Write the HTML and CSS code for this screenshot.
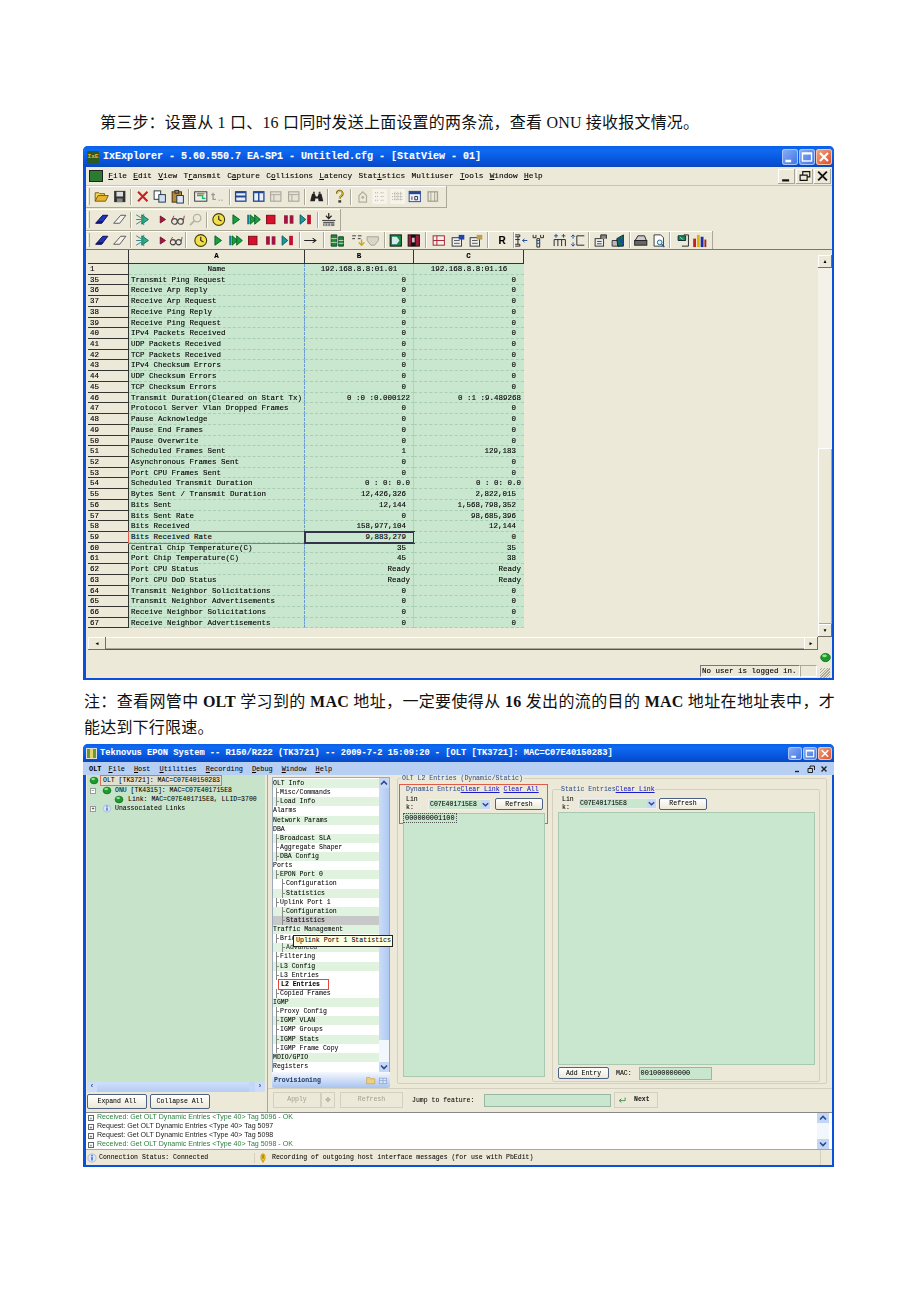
FILE: index.html
```html
<!DOCTYPE html>
<html lang="zh-CN">
<head>
<meta charset="utf-8">
<title>第三步</title>
<link rel="stylesheet" href="styles.css">
</head>
<body>
<svg class="sprite" xmlns="http://www.w3.org/2000/svg">
<symbol id="folder" viewBox="0 0 16 16"><path d="M1 13V4h4l1 1h5v2" fill="#f4d35e" stroke="#7a5a10"/><path d="M1 13l3-6h11l-3 6z" fill="#e8b62c" stroke="#7a5a10"/></symbol>
<symbol id="save" viewBox="0 0 16 16"><rect x="2" y="2" width="12" height="12" fill="#333"/><rect x="4.5" y="3" width="7" height="5" fill="#ddd"/><rect x="5" y="10" width="6" height="4" fill="#888"/></symbol>
<symbol id="x" viewBox="0 0 16 16"><path d="M3 3l10 10M13 3L3 13" stroke="#c8201c" stroke-width="2.2"/></symbol>
<symbol id="copy" viewBox="0 0 16 16"><rect x="2" y="2" width="7" height="9" fill="#fff" stroke="#234"/><rect x="7" y="6" width="7" height="8" fill="#cfe0f5" stroke="#234"/></symbol>
<symbol id="paste" viewBox="0 0 16 16"><rect x="2" y="3" width="10" height="11" fill="#b58a3a" stroke="#43300a"/><rect x="5" y="1.5" width="4" height="3" fill="#888" stroke="#333"/><rect x="7" y="7" width="7" height="8" fill="#dfe8f5" stroke="#234"/></symbol>
<symbol id="frame" viewBox="0 0 16 16"><rect x="1.5" y="3" width="13" height="10" fill="#eee" stroke="#333"/><path d="M4 7h6v3h3" stroke="#1b6" stroke-width="1.5" fill="none"/><path d="M4 5h8" stroke="#b83" stroke-width="1.5"/></symbol>
<symbol id="tdots" viewBox="0 0 16 16"><path d="M3 4v7h3M1 6h4M9 12h1M12 12h1" stroke="#999" stroke-width="1.4" fill="none"/></symbol>
<symbol id="hsplit" viewBox="0 0 16 16"><rect x="2.5" y="3" width="11" height="10" fill="#e9eef8" stroke="#23488f" stroke-width="1.4"/><path d="M2.5 8h11" stroke="#23488f" stroke-width="2"/><path d="M3 3.5h10" stroke="#23488f" stroke-width="2"/></symbol>
<symbol id="vsplit" viewBox="0 0 16 16"><rect x="2.5" y="3" width="11" height="10" fill="#e9eef8" stroke="#23488f" stroke-width="1.4"/><path d="M8 3v10" stroke="#23488f" stroke-width="1.5"/><path d="M3 3.5h10" stroke="#23488f" stroke-width="2"/></symbol>
<symbol id="gsplit" viewBox="0 0 16 16"><rect x="2.5" y="3" width="11" height="10" fill="#e6e4d6" stroke="#aaa89a" stroke-width="1.2"/><path d="M2.5 6h11M6 6v7" stroke="#aaa89a"/></symbol>
<symbol id="binoc" viewBox="0 0 16 16"><path d="M1 13l2-8h3l1 3h2l1-3h3l2 8h-5l-.5-3h-3L6 13z" fill="#222"/><path d="M4 3h2v2H4zM10 3h2v2h-2z" fill="#444"/></symbol>
<symbol id="help" viewBox="0 0 16 16"><path d="M5 5a3 3 0 1 1 4.5 2.5C8.5 8 8 9 8 10.5" stroke="#806a10" stroke-width="2.2" fill="none"/><path d="M5.300 5a2.700 2.700 0 1 1 4 2.300C8.300 8 7.800 9 7.800 10.500" stroke="#f2dc4a" stroke-width="1" fill="none"/><rect x="6.500" y="12" width="3" height="2.500" fill="#333"/></symbol>
<symbol id="glock" viewBox="0 0 16 16"><path d="M4 14V7l4-4 4 4v7z" fill="none" stroke="#b0ae9f" stroke-width="1.3"/><circle cx="8" cy="9" r="1.500" fill="#b0ae9f"/></symbol>
<symbol id="gdots" viewBox="0 0 16 16"><rect width="16" height="16" fill="#f5f3ea"/><path d="M3 4h3M3 8h3M3 12h3M9 4h4M9 8h4M9 12h4" stroke="#aaa89a" stroke-dasharray="1 1"/></symbol>
<symbol id="ggrid" viewBox="0 0 16 16"><rect width="16" height="16" fill="#f5f3ea"/><path d="M2 5h12M2 8h12M2 11h12M5 3v10M8 3v10M11 3v10" stroke="#aaa89a" stroke-dasharray="1 1"/></symbol>
<symbol id="cal" viewBox="0 0 16 16"><rect x="2" y="2.500" width="12" height="11" fill="#eef" stroke="#234a90"/><rect x="2" y="2.500" width="12" height="3" fill="#234a90"/><path d="M5 8v3.500M8 8h3v3.500H8z" stroke="#333" fill="none"/></symbol>
<symbol id="gcal" viewBox="0 0 16 16"><rect x="3" y="3" width="10" height="10" fill="none" stroke="#a5a395" stroke-width="1.400"/><path d="M6 3v10M10 3v10" stroke="#a5a395"/></symbol>
<symbol id="erase" viewBox="0 0 16 16"><path d="M1.500 12L9 3.500h5.500L8 12z" fill="#2333c0" stroke="#0a0a50"/><path d="M1.500 12h6.500l2-2.500H3.700z" fill="#141a70"/></symbol>
<symbol id="erase2" viewBox="0 0 16 16"><path d="M1.500 12L9 3.500h5.500L8 12z" fill="#f4f2ea" stroke="#555"/></symbol>
<symbol id="burst" viewBox="0 0 16 16"><path d="M1 3l5 3M1 13l5-3M1 8h5" stroke="#2b7f8a"/><path d="M7 3l7 5-7 5z" fill="#32b27a" stroke="#0c6b6b"/><path d="M9 2v12" stroke="#2b8fb0"/></symbol>
<symbol id="tri" viewBox="0 0 16 16"><path d="M6 4l6 4-6 4z" fill="#a8163f" stroke="#6d0f2a"/></symbol>
<symbol id="glass" viewBox="0 0 16 16"><circle cx="4.500" cy="10" r="3" fill="none" stroke="#444" stroke-width="1.200"/><circle cx="11" cy="10" r="3" fill="none" stroke="#444" stroke-width="1.200"/><path d="M7.500 9.500h.5M1.500 9L4 4M14 9l1-5" stroke="#a03050"/></symbol>
<symbol id="mag" viewBox="0 0 16 16"><circle cx="9.500" cy="6.500" r="4" fill="none" stroke="#b5b3a4" stroke-width="1.400"/><path d="M2 14l5-5" stroke="#b5b3a4" stroke-width="2"/></symbol>
<symbol id="clock" viewBox="0 0 16 16"><circle cx="8" cy="8" r="6.300" fill="#f4df4a" stroke="#44400a" stroke-width="1.200"/><path d="M8 4v4l3 1.500" stroke="#222" stroke-width="1.200" fill="none"/></symbol>
<symbol id="play" viewBox="0 0 16 16"><path d="M5 3l7 5-7 5z" fill="#18a03a" stroke="#09602a"/></symbol>
<symbol id="ff" viewBox="0 0 16 16"><path d="M1 3h2v10H1z" fill="#1a7a90"/><path d="M4 3l6 5-6 5z" fill="#18a03a" stroke="#09602a"/><path d="M9 3l6 5-6 5z" fill="#18a03a" stroke="#09602a"/></symbol>
<symbol id="stop" viewBox="0 0 16 16"><rect x="3.500" y="3.500" width="9" height="9" fill="#d8102c" stroke="#7a0a1a"/></symbol>
<symbol id="pause" viewBox="0 0 16 16"><rect x="3" y="3.500" width="4" height="9" fill="#a01440"/><rect x="9" y="3.500" width="4" height="9" fill="#a01440"/></symbol>
<symbol id="step" viewBox="0 0 16 16"><path d="M2 3l6 5-6 5z" fill="#1a9aa0" stroke="#0a5a60"/><rect x="9.500" y="3" width="4" height="10" fill="#c01030"/></symbol>
<symbol id="dl" viewBox="0 0 16 16"><path d="M8 1v6M5 4l3 3 3-3" stroke="#222" stroke-width="1.300" fill="none"/><path d="M1 9h14M2 11h12" stroke="#333"/><rect x="2" y="12" width="12" height="3" fill="#777"/><path d="M4 12v3M7 12v3M10 12v3" stroke="#ddd"/></symbol>
<symbol id="arrow" viewBox="0 0 16 16"><path d="M1 8h12M10 5.500L13.500 8 10 10.500" stroke="#222" stroke-width="1.100" fill="none"/></symbol>
<symbol id="bars" viewBox="0 0 16 16"><path d="M1 2h6v12H1zM9 4h5v10H9z" fill="#1f8a35" stroke="#143"/><path d="M1 6h6M1 10h6M9 8h5M9 11h5" stroke="#cdb"/></symbol>
<symbol id="ppp" viewBox="0 0 16 16"><path d="M1 3h4M7 3h4M1 6h3M7 6h3" stroke="#333"/><path d="M11 7v5M8 10l3 3 3-3" stroke="#c4a820" stroke-width="1.500" fill="none"/></symbol>
<symbol id="gheart" viewBox="0 0 16 16"><path d="M2 4h12v4l-4 5H6L2 8z" fill="#d8d6c8" stroke="#a5a395"/></symbol>
<symbol id="hall" viewBox="0 0 16 16"><rect x="2" y="2" width="12" height="12" fill="#148a44" stroke="#111"/><path d="M4 4h5l3 4-3 4H4z" fill="#d8e8f2"/></symbol>
<symbol id="hred" viewBox="0 0 16 16"><rect x="2" y="2" width="12" height="12" fill="#a01a3a" stroke="#111"/><rect x="5" y="2" width="5" height="12" fill="#111"/><rect x="6" y="5" width="3" height="5" fill="#d8b8c0"/></symbol>
<symbol id="form" viewBox="0 0 16 16"><rect x="2" y="3" width="12" height="10" fill="#f2f0e8" stroke="#a02030"/><path d="M2 8h12M6 3v10" stroke="#a02030"/></symbol>
<symbol id="formp" viewBox="0 0 16 16"><rect x="2" y="5" width="10" height="9" fill="#eee" stroke="#333"/><path d="M4 8h6M4 11h6" stroke="#555"/><rect x="9" y="2" width="6" height="5" fill="#2242b0"/></symbol>
<symbol id="formg" viewBox="0 0 16 16"><rect x="2" y="5" width="10" height="9" fill="#eee" stroke="#333"/><path d="M4 8h6M4 11h6" stroke="#555"/><rect x="9" y="2" width="6" height="5" fill="#bba050"/></symbol>
<symbol id="a1" viewBox="0 0 16 16"><path d="M2 2h5v2H2M2 7h5M2 14h5v-2H2M5 4v8" fill="none" stroke="#222"/><path d="M10 8h5M12 6l-2 2 2 2" stroke="#1a4aa0" fill="none"/></symbol>
<symbol id="a2" viewBox="0 0 16 16"><path d="M2 2v3h3V2M10 2v3h3V2M6 6h3v9H6z" fill="none" stroke="#222"/><path d="M6 8h3M6 11h3" stroke="#1a4aa0"/></symbol>
<symbol id="a3" viewBox="0 0 16 16"><path d="M2 14V7h12v7M6 7v7M10 7v7" fill="none" stroke="#222"/><path d="M4 5V1M12 5V1M2 3h4M10 3h4" stroke="#1a4aa0"/></symbol>
<symbol id="a4" viewBox="0 0 16 16"><path d="M7 3h8M7 13h8M7 3v10" fill="none" stroke="#222"/><path d="M3 2v4M3 10v4M1 4l2-2 2 2M1 12l2 2 2-2" stroke="#1a4aa0" fill="none"/></symbol>
<symbol id="house" viewBox="0 0 16 16"><rect x="2" y="6" width="9" height="8" fill="#eee" stroke="#333"/><path d="M8 6V2h6v4" fill="#888" stroke="#222"/><path d="M4 9h5M4 11.500h5" stroke="#444"/></symbol>
<symbol id="house2" viewBox="0 0 16 16"><path d="M2 8h8v6H2z" fill="#bbb" stroke="#333"/><path d="M7 6l7-4v12H8z" fill="#166a55" stroke="#123"/><path d="M10 6l4 6" stroke="#1b3fc0" stroke-width="2"/></symbol>
<symbol id="printer" viewBox="0 0 16 16"><path d="M2 8l3-5h7l2 5z" fill="#ccc" stroke="#222"/><rect x="1.500" y="8" width="13" height="5" fill="#666" stroke="#222"/></symbol>
<symbol id="prev" viewBox="0 0 16 16"><path d="M3 2h7l3 3v9H3z" fill="#fff" stroke="#333"/><circle cx="9" cy="10" r="2.500" fill="#cfe" stroke="#2a5a90"/><path d="M11 12l3 3" stroke="#2a5a90" stroke-width="1.500"/></symbol>
<symbol id="note" viewBox="0 0 16 16"><path d="M8 2h5v12H6" fill="none" stroke="#222"/><path d="M2 3h8v5H2z" fill="#138a55" stroke="#123"/><path d="M4 4l3 3" stroke="#cde"/></symbol>
<symbol id="chart" viewBox="0 0 16 16"><rect x="1" y="6" width="3" height="9" fill="#c81e1e"/><rect x="5" y="2" width="3" height="13" fill="#e0b010"/><rect x="9" y="4" width="3" height="11" fill="#1a2ea0"/><rect x="13" y="7" width="2" height="8" fill="#982828"/></symbol>
<symbol id="led" viewBox="0 0 16 16"><ellipse cx="8" cy="8" rx="7" ry="6" fill="#1f9a2c" stroke="#0d5a18"/><ellipse cx="6.500" cy="5.500" rx="3.500" ry="2" fill="#8fe88f"/></symbol>
<symbol id="info" viewBox="0 0 16 16"><circle cx="8" cy="8" r="6.500" fill="#dce6fb" stroke="#8fa6d8"/><path d="M8 6v6" stroke="#2050c8" stroke-width="2"/><circle cx="8" cy="3.800" r="1.200" fill="#2050c8"/></symbol>
<symbol id="warn" viewBox="0 0 16 16"><ellipse cx="8" cy="7" rx="3.500" ry="6" fill="#f2c820" stroke="#b08a10"/><path d="M8 3v6" stroke="#7a4a10" stroke-width="1.500"/><circle cx="8" cy="14" r="1.500" fill="#d0a010"/></symbol>
<symbol id="nfolder" viewBox="0 0 16 16"><path d="M1 14V4h5l1 2h7v8z" fill="#f2d078" stroke="#c49a40"/></symbol>
<symbol id="ndoc" viewBox="0 0 16 16"><rect x="2" y="5" width="12" height="9" fill="#d8e4f8" stroke="#7f9cc8"/><path d="M8 5v9M2 9h12" stroke="#7f9cc8"/></symbol>
<symbol id="enter" viewBox="0 0 16 16"><path d="M13 4v5H4M7 6L3.500 9 7 12" stroke="#2d8f3c" stroke-width="1.400" fill="none"/></symbol>
<symbol id="chd" viewBox="0 0 10 10"><path d="M2 3.500L5 6.500 8 3.500" fill="none" stroke="#2a4a90" stroke-width="1.600"/></symbol>
<symbol id="chu" viewBox="0 0 10 10"><path d="M2 6.500L5 3.500 8 6.500" fill="none" stroke="#2a4a90" stroke-width="1.600"/></symbol>
<symbol id="gmin" viewBox="0 0 14 14"><path d="M3 10.500h5" stroke="#fff" stroke-width="2"/></symbol>
<symbol id="gmax" viewBox="0 0 14 14"><rect x="3" y="3.500" width="8" height="7" fill="none" stroke="#fff" stroke-width="1.200"/><path d="M3 4h8" stroke="#fff" stroke-width="1.500"/></symbol>
<symbol id="gcls" viewBox="0 0 14 14"><path d="M3.500 3.500l7 7M10.500 3.500l-7 7" stroke="#fff" stroke-width="1.800"/></symbol>
</svg>

<main class="page">
<p class="para step">第三步：设置从 1 口、16 口同时发送上面设置的两条流，查看 ONU 接收报文情况。</p>

<section class="win ix">
  <header class="title">
    <span class="lxf">IxE</span>
    <span class="title-text">IxExplorer - 5.60.550.7 EA-SP1 - Untitled.cfg - [StatView - 01]</span>
    <span class="caps"><svg class="cap"><use href="#gmin"/></svg><svg class="cap"><use href="#gmax"/></svg><svg class="cap cls"><use href="#gcls"/></svg></span>
  </header>
  <nav class="menu ixmenu">
    <span class="chip"></span>
    <span><u>F</u>ile</span><span><u>E</u>dit</span><span><u>V</u>iew</span><span>T<u>r</u>ansmit</span><span>C<u>a</u>pture</span><span>C<u>o</u>llisions</span><span><u>L</u>atency</span><span>Stat<u>i</u>stics</span><span>Multiuser</span><span><u>T</u>ools</span><span><u>W</u>indow</span><span><u>H</u>elp</span>
    <span class="mdi">
      <span class="mb"><svg viewBox="0 0 16 16"><path d="M3 13h8" stroke="#111" stroke-width="2.500"/></svg></span>
      <span class="mb"><svg viewBox="0 0 16 16"><path d="M3 7h8v6H3zM6 7V3h8v6h-3" fill="none" stroke="#111" stroke-width="1.300"/></svg></span>
      <span class="mb"><svg viewBox="0 0 16 16"><path d="M3 3l10 10M13 3L3 13" stroke="#111" stroke-width="2.200"/></svg></span>
    </span>
  </nav>

  <div class="tb t1"><div class="band">
    <span class="grip"></span>
    <svg class="b"><use href="#folder"/></svg><svg class="b"><use href="#save"/></svg><i class="sep"></i>
    <svg class="b"><use href="#x"/></svg><svg class="b"><use href="#copy"/></svg><svg class="b"><use href="#paste"/></svg><i class="sep"></i>
    <svg class="b"><use href="#frame"/></svg><svg class="b"><use href="#tdots"/></svg><i class="sep"></i>
    <svg class="b"><use href="#hsplit"/></svg><svg class="b"><use href="#vsplit"/></svg><svg class="b"><use href="#gsplit"/></svg><svg class="b"><use href="#gsplit"/></svg><i class="sep"></i>
    <svg class="b"><use href="#binoc"/></svg><i class="sep"></i><svg class="b"><use href="#help"/></svg><i class="sep"></i>
    <svg class="b"><use href="#glock"/></svg><svg class="b"><use href="#gdots"/></svg><svg class="b"><use href="#ggrid"/></svg><svg class="b"><use href="#cal"/></svg><svg class="b"><use href="#gcal"/></svg>
  </div></div>

  <div class="tb t2"><div class="band">
    <span class="grip"></span>
    <svg class="b"><use href="#erase"/></svg><svg class="b"><use href="#erase2"/></svg><i class="sep"></i>
    <svg class="b"><use href="#burst"/></svg><svg class="b nar ml4"><use href="#tri"/></svg><svg class="b"><use href="#glass"/></svg><svg class="b"><use href="#mag"/></svg><i class="sep"></i>
    <svg class="b"><use href="#clock"/></svg><svg class="b"><use href="#play"/></svg><svg class="b"><use href="#ff"/></svg><svg class="b"><use href="#stop"/></svg><svg class="b"><use href="#pause"/></svg><svg class="b"><use href="#step"/></svg><i class="sep"></i>
    <svg class="b"><use href="#dl"/></svg>
  </div></div>

  <div class="tb t3"><div class="band">
    <span class="grip"></span>
    <svg class="b"><use href="#erase"/></svg><svg class="b"><use href="#erase2"/></svg><i class="sep"></i>
    <svg class="b"><use href="#burst"/></svg><svg class="b nar ml4"><use href="#tri"/></svg><svg class="b nar"><use href="#glass"/></svg><i class="sep"></i>
    <svg class="b ml3"><use href="#clock"/></svg><svg class="b"><use href="#play"/></svg><svg class="b"><use href="#ff"/></svg><svg class="b"><use href="#stop"/></svg><svg class="b"><use href="#pause"/></svg><svg class="b"><use href="#step"/></svg><i class="sep"></i>
    <svg class="b"><use href="#arrow"/></svg><i class="sep wide"></i>
    <svg class="b ml2"><use href="#bars"/></svg><svg class="b ml3"><use href="#ppp"/></svg><svg class="b mln3"><use href="#gheart"/></svg><i class="sep"></i>
    <svg class="b"><use href="#hall"/></svg><svg class="b"><use href="#hred"/></svg><i class="sep wide"></i>
    <svg class="b"><use href="#form"/></svg><svg class="b ml2"><use href="#formp"/></svg><svg class="b"><use href="#formg"/></svg><i class="sep wide"></i>
    <b class="r-btn ml2"><span>R</span></b><i class="sep"></i>
    <svg class="b mln4"><use href="#a1"/></svg><svg class="b"><use href="#a2"/></svg><svg class="b ml4"><use href="#a3"/></svg><svg class="b"><use href="#a4"/></svg><i class="sep"></i>
    <svg class="b"><use href="#house"/></svg><svg class="b"><use href="#house2"/></svg><i class="sep"></i>
    <svg class="b"><use href="#printer"/></svg><svg class="b"><use href="#prev"/></svg><i class="sep"></i>
    <svg class="b ml2"><use href="#note"/></svg><svg class="b mln1"><use href="#chart"/></svg>
  </div></div>

  <div class="sheet-area">
    <div class="sheet">
      <div class="row head"><span></span><span>A</span><span>B</span><span>C</span></div>
      <div class="row name"><span>1</span><span>Name</span><span>192.168.8.8:01.01</span><span>192.168.8.8:01.16</span></div>
      <div class="row"><span>35</span><span>Transmit Ping Request</span><span>0</span><span>0</span></div>
      <div class="row"><span>36</span><span>Receive Arp Reply</span><span>0</span><span>0</span></div>
      <div class="row"><span>37</span><span>Receive Arp Request</span><span>0</span><span>0</span></div>
      <div class="row"><span>38</span><span>Receive Ping Reply</span><span>0</span><span>0</span></div>
      <div class="row"><span>39</span><span>Receive Ping Request</span><span>0</span><span>0</span></div>
      <div class="row"><span>40</span><span>IPv4 Packets Received</span><span>0</span><span>0</span></div>
      <div class="row"><span>41</span><span>UDP Packets Received</span><span>0</span><span>0</span></div>
      <div class="row"><span>42</span><span>TCP Packets Received</span><span>0</span><span>0</span></div>
      <div class="row"><span>43</span><span>IPv4 Checksum Errors</span><span>0</span><span>0</span></div>
      <div class="row"><span>44</span><span>UDP Checksum Errors</span><span>0</span><span>0</span></div>
      <div class="row"><span>45</span><span>TCP Checksum Errors</span><span>0</span><span>0</span></div>
      <div class="row"><span>46</span><span>Transmit Duration(Cleared on Start Tx)</span><span class="tail">0 :0 :0.000122</span><span class="tail">0 :1 :9.489268</span></div>
      <div class="row"><span>47</span><span>Protocol Server Vlan Dropped Frames</span><span>0</span><span>0</span></div>
      <div class="row"><span>48</span><span>Pause Acknowledge</span><span>0</span><span>0</span></div>
      <div class="row"><span>49</span><span>Pause End Frames</span><span>0</span><span>0</span></div>
      <div class="row"><span>50</span><span>Pause Overwrite</span><span>0</span><span>0</span></div>
      <div class="row"><span>51</span><span>Scheduled Frames Sent</span><span>1</span><span>129,183</span></div>
      <div class="row"><span>52</span><span>Asynchronous Frames Sent</span><span>0</span><span>0</span></div>
      <div class="row"><span>53</span><span>Port CPU Frames Sent</span><span>0</span><span>0</span></div>
      <div class="row"><span>54</span><span>Scheduled Transmit Duration</span><span class="tail">0 : 0: 0.0</span><span class="tail">0 : 0: 0.0</span></div>
      <div class="row"><span>55</span><span>Bytes Sent / Transmit Duration</span><span>12,426,326</span><span>2,822,015</span></div>
      <div class="row"><span>56</span><span>Bits Sent</span><span>12,144</span><span>1,568,798,352</span></div>
      <div class="row"><span>57</span><span>Bits Sent Rate</span><span>0</span><span>98,685,396</span></div>
      <div class="row"><span>58</span><span>Bits Received</span><span>158,977,104</span><span>12,144</span></div>
      <div class="row hit"><span>59</span><span class="red">Bits Received Rate</span><span class="cur">9,883,279</span><span>0</span></div>
      <div class="row"><span>60</span><span>Central Chip Temperature(C)</span><span>35</span><span>35</span></div>
      <div class="row"><span>61</span><span>Port Chip Temperature(C)</span><span>45</span><span>38</span></div>
      <div class="row"><span>62</span><span>Port CPU Status</span><span class="tail">Ready</span><span class="tail">Ready</span></div>
      <div class="row"><span>63</span><span>Port CPU DoD Status</span><span class="tail">Ready</span><span class="tail">Ready</span></div>
      <div class="row"><span>64</span><span>Transmit Neighbor Solicitations</span><span>0</span><span>0</span></div>
      <div class="row"><span>65</span><span>Transmit Neighbor Advertisements</span><span>0</span><span>0</span></div>
      <div class="row"><span>66</span><span>Receive Neighbor Solicitations</span><span>0</span><span>0</span></div>
      <div class="row"><span>67</span><span>Receive Neighbor Advertisements</span><span>0</span><span>0</span></div>
    </div>
    <div class="vscroll"><span class="sbtn">▲</span><span class="strack"></span><span class="sthumb"></span><span class="sbtn">▼</span></div>
  </div>
  <div class="hscroll"><span class="sbtn wideb">◀</span><span class="htrack"></span><span class="sbtn">▶</span></div>
  <div class="ixstatus">
    <span class="nouser">No user is logged in.</span><span class="ixcell"></span>
    <span class="ledcol"><svg class="led"><use href="#led"/></svg><i class="sgrip"></i></span>
  </div>
</section>

<p class="para note">注：查看网管中 <b>OLT</b> 学习到的 <b>MAC</b> 地址，一定要使得从 <b>16</b> 发出的流的目的 <b>MAC</b> 地址在地址表中，才能达到下行限速。</p>

<section class="win tk">
  <header class="title">
    <span class="tklogo"></span>
    <span class="title-text">Teknovus EPON System -- R150/R222 (TK3721) -- 2009-7-2 15:09:20 - [OLT [TK3721]: MAC=C07E40150283]</span>
    <span class="caps"><svg class="cap"><use href="#gmin"/></svg><svg class="cap"><use href="#gmax"/></svg><svg class="cap cls"><use href="#gcls"/></svg></span>
  </header>
  <nav class="menu tkmenu">
    <b>OLT</b><span><u>F</u>ile</span><span><u>H</u>ost</span><span><u>U</u>tilities</span><span><u>R</u>ecording</span><span><u>D</u>ebug</span><span><u>W</u>indow</span><span><u>H</u>elp</span>
    <span class="tkmdi">
      <svg viewBox="0 0 8 8"><path d="M1 6.500h4" stroke="#222" stroke-width="1.400"/></svg>
      <svg viewBox="0 0 8 8"><path d="M1 3.500h4.500v4H1zM3 3.500V1h4.500v4" fill="none" stroke="#222"/></svg>
      <svg viewBox="0 0 8 8"><path d="M1.500 1.500l5 5M6.500 1.500l-5 5" stroke="#222" stroke-width="1.400"/></svg>
    </span>
  </nav>
  <div class="tkbody">
    <div class="leftcol">
      <div class="tree">
        <div class="tline"><svg class="tled"><use href="#led"/></svg><span class="olt">OLT [TK3721]: MAC=C07E40150283</span></div>
        <div class="tline t-1"><i class="pm">−</i><svg class="tled"><use href="#led"/></svg><span>ONU [TK4315]: MAC=C07E401715E8</span></div>
        <div class="tline t-2"><svg class="tled"><use href="#led"/></svg><span>Link: MAC=C07E401715E8, LLID=3700</span></div>
        <div class="tline t-1"><i class="pm">+</i><svg class="tled"><use href="#info"/></svg><span>Unassociated Links</span></div>
      </div>
      <div class="bluescroll"><span>‹</span><i></i><span>›</span></div>
      <div class="leftbtns"><button class="btn">Expand All</button><button class="btn">Collapse All</button></div>
    </div>
    <div class="midright">
      <div class="panels">
        <div class="navcol">
          <div class="navwrap">
            <ul class="navlist">
              <li>OLT Info</li><li class="l1">Misc/Commands</li><li class="l1">Load Info</li><li>Alarms</li><li>Network Params</li><li>DBA</li><li class="l1">Broadcast SLA</li><li class="l1">Aggregate Shaper</li><li class="l1">DBA Config</li><li>Ports</li><li class="l1">EPON Port 0</li><li class="l2">Configuration</li><li class="l2">Statistics</li><li class="l1">Uplink Port 1</li><li class="l2">Configuration</li><li class="l2 sel">Statistics</li><li>Traffic Management</li><li class="l1">Bridging</li><li class="l2 adv">Advanced</li><li class="l1">Filtering</li><li class="l1">L3 Config</li><li class="l1">L3 Entries</li><li class="l1 cur2">L2 Entries</li><li class="l1">Copied Frames</li><li>IGMP</li><li class="l1">Proxy Config</li><li class="l1">IGMP VLAN</li><li class="l1">IGMP Groups</li><li class="l1">IGMP Stats</li><li class="l1">IGMP Frame Copy</li><li>MDIO/GPIO</li><li>Registers</li>
            </ul>
            <div class="navscroll"><svg><use href="#chu"/></svg><i></i><svg class="end"><use href="#chd"/></svg></div>
            <div class="tip">Uplink Port 1 Statistics</div>
          </div>
          <div class="prov"><span>Provisioning</span><svg class="pi"><use href="#nfolder"/></svg><svg class="pi"><use href="#ndoc"/></svg></div>
        </div>
        <i class="split"></i>
        <fieldset class="l2box">
          <legend>OLT L2 Entries (Dynamic/Static)</legend>
          <div class="entries">
            <div class="ent dyn">
              <div class="dyn-hi">
                <div class="ent-head">Dynamic Entrie<a>Clear Link</a> <a>Clear All</a></div>
                <div class="ent-ctl"><span class="lnk">Lin<br>k:</span><span class="combo">C07E401715E8<svg><use href="#chd"/></svg></span><button class="btn ref">Refresh</button></div>
                <div class="list-top"><span class="mac-sel">000000001100</span></div>
              </div>
              <div class="list-fill"></div>
            </div>
            <fieldset class="ent sta">
              <legend class="ent-head">Static Entries<a>Clear Link</a></legend>
              <div class="ent-ctl"><span class="lnk">Lin<br>k:</span><span class="combo">C07E401715E8<svg><use href="#chd"/></svg></span><button class="btn ref">Refresh</button></div>
              <div class="list-fill"></div>
              <div class="addrow"><button class="btn add">Add Entry</button><span>MAC:</span><span class="macin">001000000000</span></div>
            </fieldset>
          </div>
        </fieldset>
      </div>
      <div class="actionrow">
        <span class="fbtn apply">Apply</span><span class="fbtn plus">✥</span><span class="fbtn refr">Refresh</span>
        <span class="jump">Jump to feature:</span><span class="jumpin"></span>
        <span class="fbtn next"><svg class="pi"><use href="#enter"/></svg>Next</span>
      </div>
    </div>
  </div>
  <div class="log">
    <div class="loglines">
      <div class="g"><i>+</i>Received: Get OLT Dynamic Entries &lt;Type 40&gt; Tag 5096 - OK</div>
      <div><i>+</i>Request: Get OLT Dynamic Entries &lt;Type 40&gt; Tag 5097</div>
      <div><i>+</i>Request: Get OLT Dynamic Entries &lt;Type 40&gt; Tag 5098</div>
      <div class="g"><i>+</i>Received: Get OLT Dynamic Entries &lt;Type 40&gt; Tag 5098 - OK</div>
    </div>
    <div class="logscroll"><svg><use href="#chu"/></svg><i></i><svg><use href="#chd"/></svg></div>
  </div>
  <footer class="tkstatus">
    <span class="st1"><svg class="pi"><use href="#info"/></svg>Connection Status: Connected</span>
    <span class="st2"><svg class="pi"><use href="#warn"/></svg>Recording of outgoing host interface messages (for use with PbEdit)</span>
    <span class="st3"></span>
  </footer>
</section>
</main>
</body>
</html>
```

FILE: styles.css
```css
* { box-sizing: border-box; }
html, body { margin: 0; padding: 0; background: #fff; }
body { font-family: "Liberation Serif", "Noto Sans CJK SC", serif; color: #111; }
.sprite { width: 0; height: 0; position: absolute; }
.page { width: 920px; height: 1302px; padding: 110px 86px 0 83px; overflow: hidden; }

.para { margin: 0; font-size: 16px; line-height: 26px; letter-spacing: .2px; }
.step { padding-left: 17px; height: 36px; }
.note { width: 751px; margin: 9px 0 3px 1px; height: 52px; text-align: justify; }

.win { width: 751px; display: flex; flex-direction: column; background: #ece9d8; border: solid #0a50d8; border-width: 0 2px 2px 3px; border-radius: 5px 5px 0 0; filter: blur(.3px); font-family: "Liberation Mono", monospace; color: #000; -webkit-text-stroke: .12px currentColor; }
.ix { height: 534px; font-size: 7.5px; }
.tk { height: 423px; font-size: 6.5px; -webkit-text-stroke: .05px currentColor; }

.title { display: flex; align-items: center; margin: 0 -2px 0 -3px; background: linear-gradient(#0a5fe8, #0f6af2 20%, #0754dc 70%, #0a48c0); border-radius: 5px 5px 0 0; color: #fff; font-weight: bold; }
.ix .title { height: 21px; padding: 0 2px 0 4px; font-size: 10px; }
.tk .title { height: 18px; padding: 0 2px 0 3px; font-size: 8.72px; }
.title-text { white-space: pre; flex: 1; }
.lxf { width: 12px; height: 12px; margin: 0 4px 0 0; background: #2c5a20; color: #e8b020; font-size: 6px; line-height: 12px; text-align: center; }
.tklogo { width: 11px; height: 11px; margin: 0 3px 0 0; background: linear-gradient(90deg, #5da030 33%, #e8d070 33% 66%, #5da030 66%); border: 1px solid #ddd; }
.caps { display: flex; gap: 1px; }
.cap { display: block; width: 16px; height: 16px; border-radius: 3px; background: linear-gradient(135deg, #8cb0f4, #3d72e4); box-shadow: inset 0 0 0 1px #a8c4f8; }
.cap.cls { background: linear-gradient(135deg, #f0a888, #dc4a20); box-shadow: inset 0 0 0 1px #f4c4ac; }
.tk .cap { width: 14px; height: 13px; }

.menu { display: flex; align-items: center; white-space: nowrap; }
u { text-decoration: underline; }
.ixmenu { height: 19px; padding-left: 3px; gap: 6.3px; font-size: 7.8px; border-bottom: 1px solid #c8c5b2; }
.chip { width: 14px; height: 12px; margin-right: -1px; background: #2a7a30; border: 1px solid #222; }
.mdi { display: flex; gap: 1px; margin-left: auto; padding-right: 1px; }
.mb { width: 17px; height: 15px; display: flex; background: #ece9d8; box-shadow: inset -1px -1px 0 #a9a696, inset 1px 1px 0 #fff; }
.mb svg { width: 15px; height: 14px; margin: auto; }
.tkmenu { height: 13px; margin: 0 -2px 0 -3px; padding-left: 6px; gap: 9px; background: #b8cff4; font-size: 6.9px; }
.tkmenu b { margin-right: -2px; }
.tkmdi { display: flex; gap: 5px; margin-left: auto; padding-right: 6px; }
.tkmdi svg { width: 8px; height: 8px; }

.tb { display: flex; align-items: stretch; }
.t1 { height: 22px; }
.t2 { height: 23px; padding-top: 1px; }
.t3 { height: 18px; }
.band { display: inline-flex; align-items: center; padding: 0 5px 0 1px; border-right: 1px solid #aca899; border-bottom: 1px solid #aca899; box-shadow: inset 0 1px 0 #fff; }
.t2 .band { padding-right: 2px; }
.t3 .band { border-bottom: 0; padding-right: 3px; }
.grip { width: 3px; height: 80%; margin-right: 3px; border-left: 1px solid #fff; border-right: 1px solid #aca899; }
.b { width: 17.5px; height: 15px; flex: none; }
.nar { width: 14px; }
.ml2 { margin-left: 2px; }
.ml3 { margin-left: 3px; }
.ml4 { margin-left: 4px; }
.mln1 { margin-left: -1px; }
.mln3 { margin-left: -3px; }
.mln4 { margin-left: -4px; }
.sep { width: 1px; height: 16px; margin: 0 2.5px 0 2px; background: #aca899; flex: none; box-shadow: 1px 0 0 #fff; }
.sep.wide { margin: 0 3.5px 0 3px; }
.r-btn { width: 17px; text-align: center; font: bold 10px "Liberation Sans", sans-serif; flex: none; }

.sheet-area { display: flex; height: 388px; padding-left: 2px; border-top: 1px solid #777; }
.sheet { width: 436px; flex: none; }
.row { display: grid; grid-template-columns: 41px 176px 109px 110px; height: 10.72px; line-height: 10px; }
.row span { background: #c9e6cf; border-bottom: 1px dashed #a8cfb2; padding: 0 7px 0 2px; text-align: right; white-space: pre; overflow: hidden; }
.row span:nth-child(1) { background: #ece9d8; border: solid #333; border-width: 0 1px 1px 0; text-align: left; }
.row span:nth-child(2) { text-align: left; border-right: 1px dashed #6a9bd0; }
.row span:nth-child(3) { border-right: 1px solid #b3d3bb; }
.row span:nth-child(4) { padding-right: 8px; }
.row span.tail { padding-right: 3px; }
.head { height: 14px; line-height: 13px; }
.head span, .head span:nth-child(n) { background: #ece9d8; border: solid #333; border-width: 0 1px 1px 0; text-align: center; font-weight: bold; line-height: 13px; padding: 0; }
.name span:nth-child(n+2) { text-align: center; padding: 0; }
.hit { position: relative; z-index: 1; }
.row span.red { overflow: visible; outline: 1px solid #e05a48; }
.row span.cur { overflow: visible; outline: 2px solid #33334a; outline-offset: -1px; }
.vscroll { width: 14px; margin: 5px 0 0 auto; display: flex; flex-direction: column; background: #f4f2e8; }
.sbtn { width: 14px; height: 13px; flex: none; display: flex; align-items: center; justify-content: center; font-size: 5px; background: #ece9d8; box-shadow: inset -1px -1px 0 #716f64, inset 1px 1px 0 #fff; -webkit-text-stroke: 0; }
.strack { height: 180px; }
.sthumb { flex: 1; background: #ece9d8; box-shadow: inset 1px 1px 0 #fff, inset -1px -1px 0 #aca899; }
.hscroll { display: flex; height: 13px; margin: 0 14px 0 2px; border-bottom: 1px solid #555; }
.wideb { width: 18px; }
.htrack { flex: 1; background: #ece9d8; box-shadow: inset 0 1px 0 #fff, inset 0 -1px 0 #aca899; }
.ixstatus { display: flex; flex: 1; align-items: flex-end; justify-content: flex-end; }
.nouser { flex: none; width: 100px; height: 12px; line-height: 10px; padding-left: 1px; border: 1px solid; border-color: #777 #fff #fff #777; white-space: nowrap; font-size: 7.5px; margin-bottom: 1px; }
.ixcell { flex: none; width: 17px; height: 12px; margin: 0 1px 1px 0; border: 1px solid; border-color: #aca899 #fff #fff #aca899; }
.ledcol { flex: none; width: 14px; height: 28px; display: flex; flex-direction: column; align-items: center; justify-content: space-between; }
.led { width: 11px; height: 11px; margin-top: 2px; }
.sgrip { width: 10px; height: 10px; background: repeating-linear-gradient(135deg, transparent 0 1px, #aca899 1px 2px); }

.tkbody { display: flex; height: 337px; padding: 0 0 0 1px; }
.leftcol { width: 178px; flex: none; display: flex; flex-direction: column; }
.tree { height: 307px; background: #c7e3ca; padding: 0 0 0 2px; }
.tline { display: flex; align-items: center; height: 9px; white-space: nowrap; gap: 3px; }
.tline:first-child { height: 11px; gap: 1px; }
.t-1 { padding-left: 1px; }
.t-2 { padding-left: 25px; gap: 4px; }
.pm { width: 6px; height: 6px; margin-right: 3px; display: flex; align-items: center; justify-content: center; border: 1px solid #9a9a9a; background: #fff; font-style: normal; font-size: 5px; }
.tled { width: 10px; height: 9px; flex: none; }
.olt { border: 1px solid #e07060; background: #dfe0d0; padding: 0 0 0 2px; height: 11px; line-height: 9px; width: 122px; }
.bluescroll { height: 10px; display: flex; align-items: center; background: #c4d6f5; justify-content: space-between; font-weight: bold; color: #2a4a90; }
.bluescroll span { width: 10px; height: 10px; line-height: 9px; text-align: center; background: #cddcf8; }
.bluescroll i { flex: 1; margin-right: 6px; height: 10px; background: linear-gradient(#cfe0fb, #b5cbf2); }
.leftbtns { display: flex; gap: 3px; padding-top: 2px; }
.btn { font: inherit; color: inherit; -webkit-text-stroke: inherit; background: linear-gradient(#fff, #ece9d8); border: 1px solid #4d6185; border-radius: 2px; padding: 0; }
.leftbtns .btn { width: 60px; height: 15px; }
.midright { flex: 1; display: flex; flex-direction: column; min-width: 0; margin-left: 2px; border-left: 1px solid #aca899; }
.panels { display: flex; height: 313px; padding-left: 4px; }
.navcol { width: 118px; flex: none; padding-top: 2px; display: flex; flex-direction: column; }
.navwrap { position: relative; display: flex; height: 295px; border: 1px solid #9ab; border-bottom: 0; }
.navlist { list-style: none; margin: 0; padding: 1px 0 0; flex: 1; background: #fff; white-space: nowrap; }
.navlist li { height: 9.13px; line-height: 9px; padding-left: 0; background-color: #dff3df; }
.navlist li:nth-child(even) { background-color: #fff; }
.navlist .l1 { padding-left: 7px; background-image: linear-gradient(#888, #888), linear-gradient(#888, #888); background-size: 1px 100%, 3px 1px; background-position: 3px 0, 3px 50%; background-repeat: no-repeat; }
.navlist .l2 { padding-left: 13px; background-image: linear-gradient(#888, #888), linear-gradient(#888, #888); background-size: 1px 100%, 3px 1px; background-position: 9px 0, 9px 50%; background-repeat: no-repeat; }
.navlist li.sel { background-color: #c8c8c8; }
.navlist li.cur2 { font-weight: bold; outline: 1px solid #e04838; width: 49px; margin-left: 6px; padding-left: 2px; background-image: none; background-color: transparent; }
.adv { color: #333; }
.navscroll { width: 10px; flex: none; display: flex; flex-direction: column; background: #f2f6fd; }
.navscroll svg { width: 10px; height: 10px; flex: none; background: #c6d8f6; }
.navscroll i { height: 252px; background: linear-gradient(90deg, #cbdcf8, #b0c8f2); }
.navscroll .end { margin-top: auto; }
.tip { position: absolute; left: 20px; top: 157px; width: 100px; height: 12px; line-height: 10px; padding-left: 2px; background: #ffffe1; border: 1px solid #222; white-space: nowrap; font-size: 6.6px; }
.prov { height: 16px; display: flex; align-items: center; gap: 2px; padding: 0 2px; background: linear-gradient(#f5f8fe, #a8c3ef); border-radius: 0 0 2px 2px; font-weight: bold; color: #22406e; }
.prov span { flex: 1; }
.pi { width: 10px; height: 10px; flex: none; }
.split { width: 7px; flex: none; }
.l2box { flex: 1; min-width: 0; margin: 0 5px 0 0; padding: 0 0 1px 2px; border: 1px solid #d4d0c0; border-radius: 2px; height: 309px; }
.l2box > legend { padding: 0 1px; color: #35508a; margin-left: 1px; line-height: 7px; }
.entries { display: flex; gap: 5px; height: 300px; }
.ent { display: flex; flex-direction: column; min-width: 0; }
.dyn { width: 147px; margin: 3px 0 5px; }
.sta { width: 268px; margin: 3px 0 0; padding: 0 4px 0 5px; border: 1px solid #d4d0c0; border-radius: 2px; }
.dyn-hi { outline: 1px solid #e05a48; padding: 0 2px 0 3px; height: 38px; flex: none; }
.ent-head { height: 9px; line-height: 9px; color: #35508a; white-space: nowrap; padding: 0 0 0 3px; }
.sta > .ent-head { margin-left: 3px; padding: 0; }
.ent-head a { color: #1a1ac8; text-decoration: underline; }
.ent-ctl { display: flex; align-items: center; height: 19px; gap: 9px; padding: 1px 0 0 3px; flex: none; }
.sta .ent-ctl { gap: 3px; height: 18px; padding-left: 4px; }
.lnk { line-height: 8px; width: 13px; flex: none; }
.combo { width: 63px; height: 11px; line-height: 10px; display: flex; justify-content: space-between; background: #c9e6cf; border: 1px solid #eee; padding: 0 0 0 1px; white-space: nowrap; flex: none; }
.combo svg { width: 9px; height: 9px; background: #c6d8f6; flex: none; }
.sta .combo { width: 79px; }
.ref { width: 48px; height: 12px; margin-left: -5px; flex: none; }
.sta .ref { margin-left: -1px; }
.list-top { height: 10px; background: #c9e6cf; border: 1px solid #a8c8b0; border-bottom: 0; line-height: 8px; font-size: 6.9px; }
.mac-sel { outline: 1px dotted #555; display: inline-block; padding: 0 1px; }
.list-fill { flex: 1; background: #c9e6cf; border: 1px solid #a8c8b0; }
.dyn .list-fill { border-top: 0; margin: 0 2px 0 3px; }
.addrow { height: 16px; display: flex; align-items: center; gap: 7px; flex: none; }
.add { width: 51px; height: 12px; }
.macin { width: 73px; height: 13px; line-height: 11px; background: #c9e6cf; border: 1px solid #99b8a4; padding-left: 1px; font-size: 6.9px; }

.actionrow { display: flex; align-items: center; height: 24px; padding: 0 0 1px 5px; border-top: 1px solid #d4d0c0; }
.fbtn { height: 16px; line-height: 14px; text-align: center; border: 1px solid #d4d0c0; color: #a5a395; }
.apply { width: 48px; }
.plus { width: 14px; margin-right: 5px; font-family: "DejaVu Sans", sans-serif; }
.refr { width: 63px; }
.jump { width: 72px; padding-left: 9px; white-space: nowrap; margin-right: 9px; }
.jumpin { width: 127px; height: 13px; background: #c9e6cf; border: 1px solid #99b8a4; }
.next { width: 44px; margin-left: 3px; color: #222; display: flex; align-items: center; gap: 7px; padding-left: 2px; font-weight: bold; }

.log { display: flex; height: 37px; padding-right: 3px; background: #fff; border-top: 1px solid #888; }
.loglines { flex: 1; font: 7.07px/9.1px "Liberation Sans", sans-serif; -webkit-text-stroke: 0; color: #222; margin-top: -1px; }
.loglines i { display: inline-block; width: 6px; height: 6px; margin: 0 3px 0 2px; border: 1px solid #666; font-size: 5px; line-height: 4px; font-style: normal; text-align: center; vertical-align: -1px; }
.loglines .g { color: #2e8040; }
.logscroll { width: 12px; display: flex; flex-direction: column; justify-content: space-between; background: #f2f6fd; }
.logscroll svg { width: 12px; height: 10px; flex: none; background: #c4d6f5; }
.logscroll i { flex: 1; }
.tkstatus { display: flex; flex: 1; align-items: center; border-top: 1px solid #aca899; white-space: pre; }
.st1 { width: 169px; display: flex; align-items: center; gap: 2px; padding-left: 1px; border-right: 1px solid #d4d0c0; }
.st2 { flex: 1; display: flex; align-items: center; gap: 4px; padding-left: 3px; }
.st3 { width: 12px; height: 100%; border-left: 1px solid #d4d0c0; }
```
